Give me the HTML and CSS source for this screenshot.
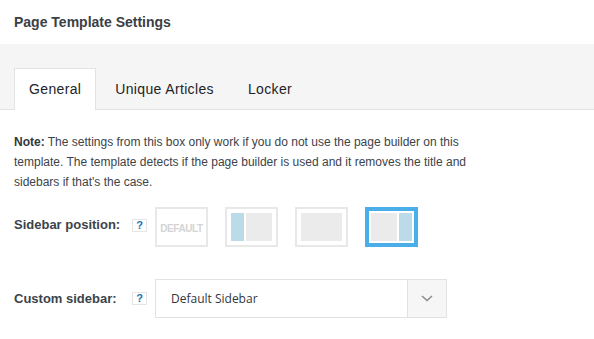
FILE: index.html
```html
<!DOCTYPE html>
<html lang="en">
<head>
    <meta charset="UTF-8">
    <meta name="viewport" content="width=device-width, initial-scale=1.0">
    <title>Page Template Settings</title>
    <link rel="stylesheet" href="styles.css">
</head>
<body>
    <div class="metabox">
        <h2 class="metabox-title">Page Template Settings</h2>

        <div class="tabs">
            <div class="tab active">General</div>
            <div class="tab">Unique Articles</div>
            <div class="tab">Locker</div>
        </div>

        <div class="tab-content">
            <p class="note"><strong>Note:</strong> The settings from this box only work if you do not use the page builder on this template. The template detects if the page builder is used and it removes the title and sidebars if that's the case.</p>

            <div class="field field-layouts">
                <label class="field-label">Sidebar position:</label>
                <span class="help">?</span>
                <div class="layouts">
                    <div class="layout">
                        <div class="layout-img default">DEFAULT</div>
                    </div>
                    <div class="layout">
                        <div class="layout-img">
                            <span class="side"></span>
                            <span class="main"></span>
                        </div>
                    </div>
                    <div class="layout">
                        <div class="layout-img">
                            <span class="main"></span>
                        </div>
                    </div>
                    <div class="layout selected">
                        <div class="layout-img">
                            <span class="main"></span>
                            <span class="side"></span>
                        </div>
                    </div>
                </div>
            </div>

            <div class="field field-select">
                <label class="field-label">Custom sidebar:</label>
                <span class="help">?</span>
                <div class="select">
                    <span class="select-value">Default Sidebar</span>
                    <span class="select-arrow">
                        <svg width="12" height="7" viewBox="0 0 12 7">
                            <path d="M1 1 L6 5.5 L11 1" fill="none" stroke="#8c8c8c" stroke-width="1.5"/>
                        </svg>
                    </span>
                </div>
            </div>
        </div>
    </div>
</body>
</html>
```

FILE: styles.css
```css
body {
    margin: 0;
    background: #fff;
    font-family: 'Liberation Sans', Arial, sans-serif;
    color: #3c434a;
}
.metabox-title {
    margin: 0;
    height: 44px;
    padding: 0 14px;
    display: flex;
    align-items: center;
    font-size: 14px;
    font-weight: bold;
    color: #3b4045;
}
.tabs {
    display: flex;
    background: #f5f5f5;
    padding: 24px 14px 0;
    border-bottom: 1px solid #e3e3e3;
    height: 41px;
}
.tab {
    padding: 0 14px;
    margin-right: 4px;
    line-height: 40px;
    height: 41px;
    font-size: 14px;
    letter-spacing: 0.35px;
    color: #1d2327;
    border: 1px solid transparent;
    border-bottom: none;
}
.tab.active {
    background: #fff;
    border-color: #e3e3e3;
}
.tab-content {
    padding: 22px 14px 0;
}
.note {
    margin: 0 0 15px;
    max-width: 475px;
    font-size: 12px;
    line-height: 20px;
}
.note strong {
    color: #32373c;
}
.field {
    display: flex;
    align-items: center;
}
.field-layouts .field-label {
    margin-bottom: 6px;
}
.field-layouts .help {
    margin-bottom: 3px;
}
.field-select {
    margin-top: 32px;
}
.field-label {
    width: 118px;
    font-size: 13px;
    font-weight: bold;
    color: #3c434a;
}
.help {
    width: 13px;
    height: 11px;
    margin-right: 8px;
    border: 1px solid #e5e5e5;
    font-size: 11px;
    font-weight: bold;
    line-height: 11px;
    text-align: center;
    color: #2271b1;
}
.layouts {
    display: flex;
    gap: 17px;
}
.layout {
    width: 41px;
    height: 28px;
    padding: 4px;
    border: 2px solid #e8e8e8;
}
.layout.selected {
    padding: 2px;
    border: 4px solid #4aafe9;
}
.layout-img {
    display: flex;
    gap: 2px;
    height: 28px;
}
.layout-img .main {
    flex: 1;
    background: #ebebeb;
}
.layout-img .side {
    width: 13px;
    background: #bcdbe9;
}
.layout-img.default {
    align-items: center;
    justify-content: center;
    padding-top: 2px;
    height: 26px;
    font-size: 10px;
    letter-spacing: -0.4px;
    font-weight: bold;
    color: #d4d4d4;
}
.select {
    display: flex;
    width: 290px;
    height: 37px;
    border: 1px solid #e2e2e2;
}
.select-value {
    flex: 1;
    padding-left: 15px;
    line-height: 37px;
    font-family: 'Open Sans', sans-serif;
    font-size: 12px;
    color: #32373c;
}
.select-arrow {
    width: 38px;
    display: flex;
    align-items: center;
    justify-content: center;
    background: #f6f6f6;
    border-left: 1px solid #e2e2e2;
}
```
